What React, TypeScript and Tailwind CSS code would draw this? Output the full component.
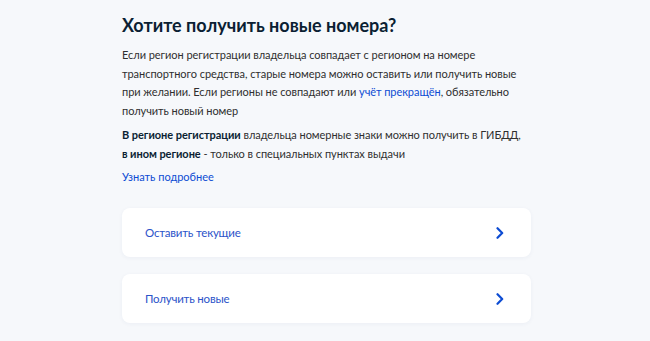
import React from "react";

function Chevron() {
  return (
    <svg width="8" height="12" viewBox="0 0 8 12" fill="none">
      <path d="M1.5 1.2L6.2 6L1.5 10.8" stroke="#0d4cd3" strokeWidth="2.2" strokeLinecap="round" strokeLinejoin="round" />
    </svg>
  );
}

function Card({ label }: { label: string }) {
  return (
    <div className="flex h-[49px] items-center justify-between rounded-lg bg-white pl-[23px] pr-[27px] shadow-[0_1px_4px_rgba(30,60,120,0.05)]">
      <span className="text-[11.5px] tracking-[-0.2px] text-[#2b53c9]">{label}</span>
      <Chevron />
    </div>
  );
}

export default function App() {
  return (
    <div
      className="flex h-[341px] w-[650px] justify-center overflow-hidden bg-[#f6f8fb]"
      style={{ fontFamily: "Lato, 'Noto Sans', sans-serif" }}
    >
      <div className="ml-[2px] flex w-[410px] flex-col pl-[1px] pt-[13px]">
        <h1 className="text-[18px] font-bold leading-[24px] text-[#0b1f33]">Хотите получить новые номера?</h1>
        <p className="mt-[9px] w-[406px] text-[11px] leading-[18.7px] tracking-[-0.05px] text-[#2f2f2f]">
          Если регион регистрации владельца совпадает с регионом на номере транспортного средства, старые номера можно
          оставить или получить новые при желании. Если регионы не совпадают или{" "}
          <span className="text-[#0d4cd3]">учёт прекращён</span>, обязательно получить новый номер
        </p>
        <p className="mt-[5px] w-[406px] text-[11px] leading-[18.7px] tracking-[-0.05px] text-[#2f2f2f]">
          <span className="font-bold text-[#0b1f33]">В регионе регистрации</span> владельца номерные знаки можно получить
          в ГИБДД, <span className="font-bold text-[#0b1f33]">в ином регионе</span> - только в специальных пунктах выдачи
        </p>
        <div className="mt-[5px] text-[11px] leading-[18px] text-[#0d4cd3]">Узнать подробнее</div>
        <div className="mt-[22px] flex flex-col gap-[17px]">
          <Card label="Оставить текущие" />
          <Card label="Получить новые" />
        </div>
      </div>
    </div>
  );
}
